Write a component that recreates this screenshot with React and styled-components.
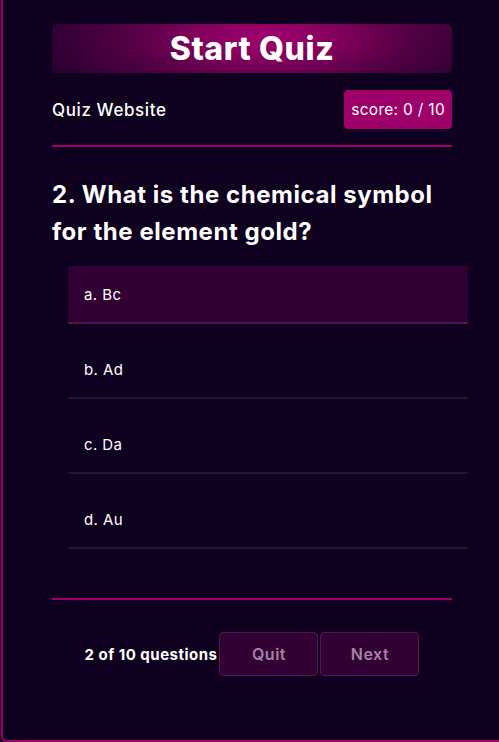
import React from "react";
import styled, { createGlobalStyle } from "styled-components";

const GlobalStyle = createGlobalStyle`
  html, body {
    margin: 0;
    padding: 0;
    background: #0e001e;
  }
  body {
    font-family: Inter, "Noto Sans", sans-serif;
    color: #ffffff;
  }
`;

const Card = styled.div`
  box-sizing: border-box;
  margin-left: 1px;
  min-height: 742px;
  border-left: 2px solid #a0006c;
  border-bottom: 2px solid #a0006c;
  border-bottom-left-radius: 6px;
  background: #0e001e;
  padding: 24px 0 0 49px;
`;

const Content = styled.div`
  width: 400px;
`;

const TitleBox = styled.div`
  height: 49px;
  border-radius: 5px;
  background: radial-gradient(ellipse 58% 160% at 54% 25%, #a2006f 0%, #82005c 30%, #520044 62%, #2a0030 100%);
  display: flex;
  align-items: center;
  justify-content: center;
  font-size: 32px;
  font-weight: 800;
  letter-spacing: 0.6px;
`;

const HeaderRow = styled.div`
  margin-top: 17px;
  display: flex;
  justify-content: space-between;
  align-items: center;
`;

const SiteName = styled.div`
  font-size: 17px;
  font-weight: 500;
  letter-spacing: 0.6px;
`;

const ScoreBadge = styled.div`
  height: 39px;
  padding: 0 7px;
  background: #9d0068;
  border-radius: 4px;
  display: flex;
  align-items: center;
  font-size: 15.5px;
  font-weight: 400;
  letter-spacing: 0.3px;
`;

const Divider = styled.div`
  height: 2px;
  background: #a0006c;
  margin-top: ${(p) => p.$top}px;
`;

const Question = styled.h2`
  margin: 29px 0 0 0;
  font-size: 24px;
  line-height: 37px;
  font-weight: 700;
  letter-spacing: 0.55px;
`;

const OptionList = styled.div`
  margin-left: 16px;
  width: 400px;
  display: flex;
  flex-direction: column;
  gap: 17px;
  margin-top: 16px;
`;

const Option = styled.div`
  box-sizing: border-box;
  height: 58px;
  padding: 0 16px;
  display: flex;
  align-items: center;
  font-size: 15px;
  letter-spacing: 0.4px;
  background: ${(p) => (p.$selected ? "#330033" : "transparent")};
  border-bottom: 2px solid ${(p) => (p.$selected ? "#4d1a4d" : "#201830")};
`;

const Footer = styled.div`
  margin-top: 32px;
  display: flex;
  justify-content: center;
  align-items: center;
  gap: 2px;
`;

const Counter = styled.div`
  font-size: 15px;
  font-weight: 700;
  letter-spacing: 0.5px;
`;

const Button = styled.button`
  box-sizing: border-box;
  width: 99px;
  height: 44px;
  margin: 0;
  background: #330033;
  border: 1px solid #4d1a4d;
  border-radius: 4px;
  color: #a383a3;
  font-family: inherit;
  font-size: 16px;
  font-weight: 600;
  letter-spacing: 0.5px;
`;

const options = [
  { label: "a. Bc", selected: true },
  { label: "b. Ad" },
  { label: "c. Da" },
  { label: "d. Au" },
];

export default function App() {
  return (
    <>
      <GlobalStyle />
      <Card>
        <Content>
          <TitleBox>Start Quiz</TitleBox>
          <HeaderRow>
            <SiteName>Quiz Website</SiteName>
            <ScoreBadge>score: 0 / 10</ScoreBadge>
          </HeaderRow>
          <Divider $top={16} />
          <Question>
            2. What is the chemical symbol
            <br />
            for the element gold?
          </Question>
          <OptionList>
            {options.map((o) => (
              <Option key={o.label} $selected={o.selected}>
                {o.label}
              </Option>
            ))}
          </OptionList>
          <Divider $top={49} />
          <Footer>
            <Counter>2 of 10 questions</Counter>
            <Button>Quit</Button>
            <Button>Next</Button>
          </Footer>
        </Content>
      </Card>
    </>
  );
}
